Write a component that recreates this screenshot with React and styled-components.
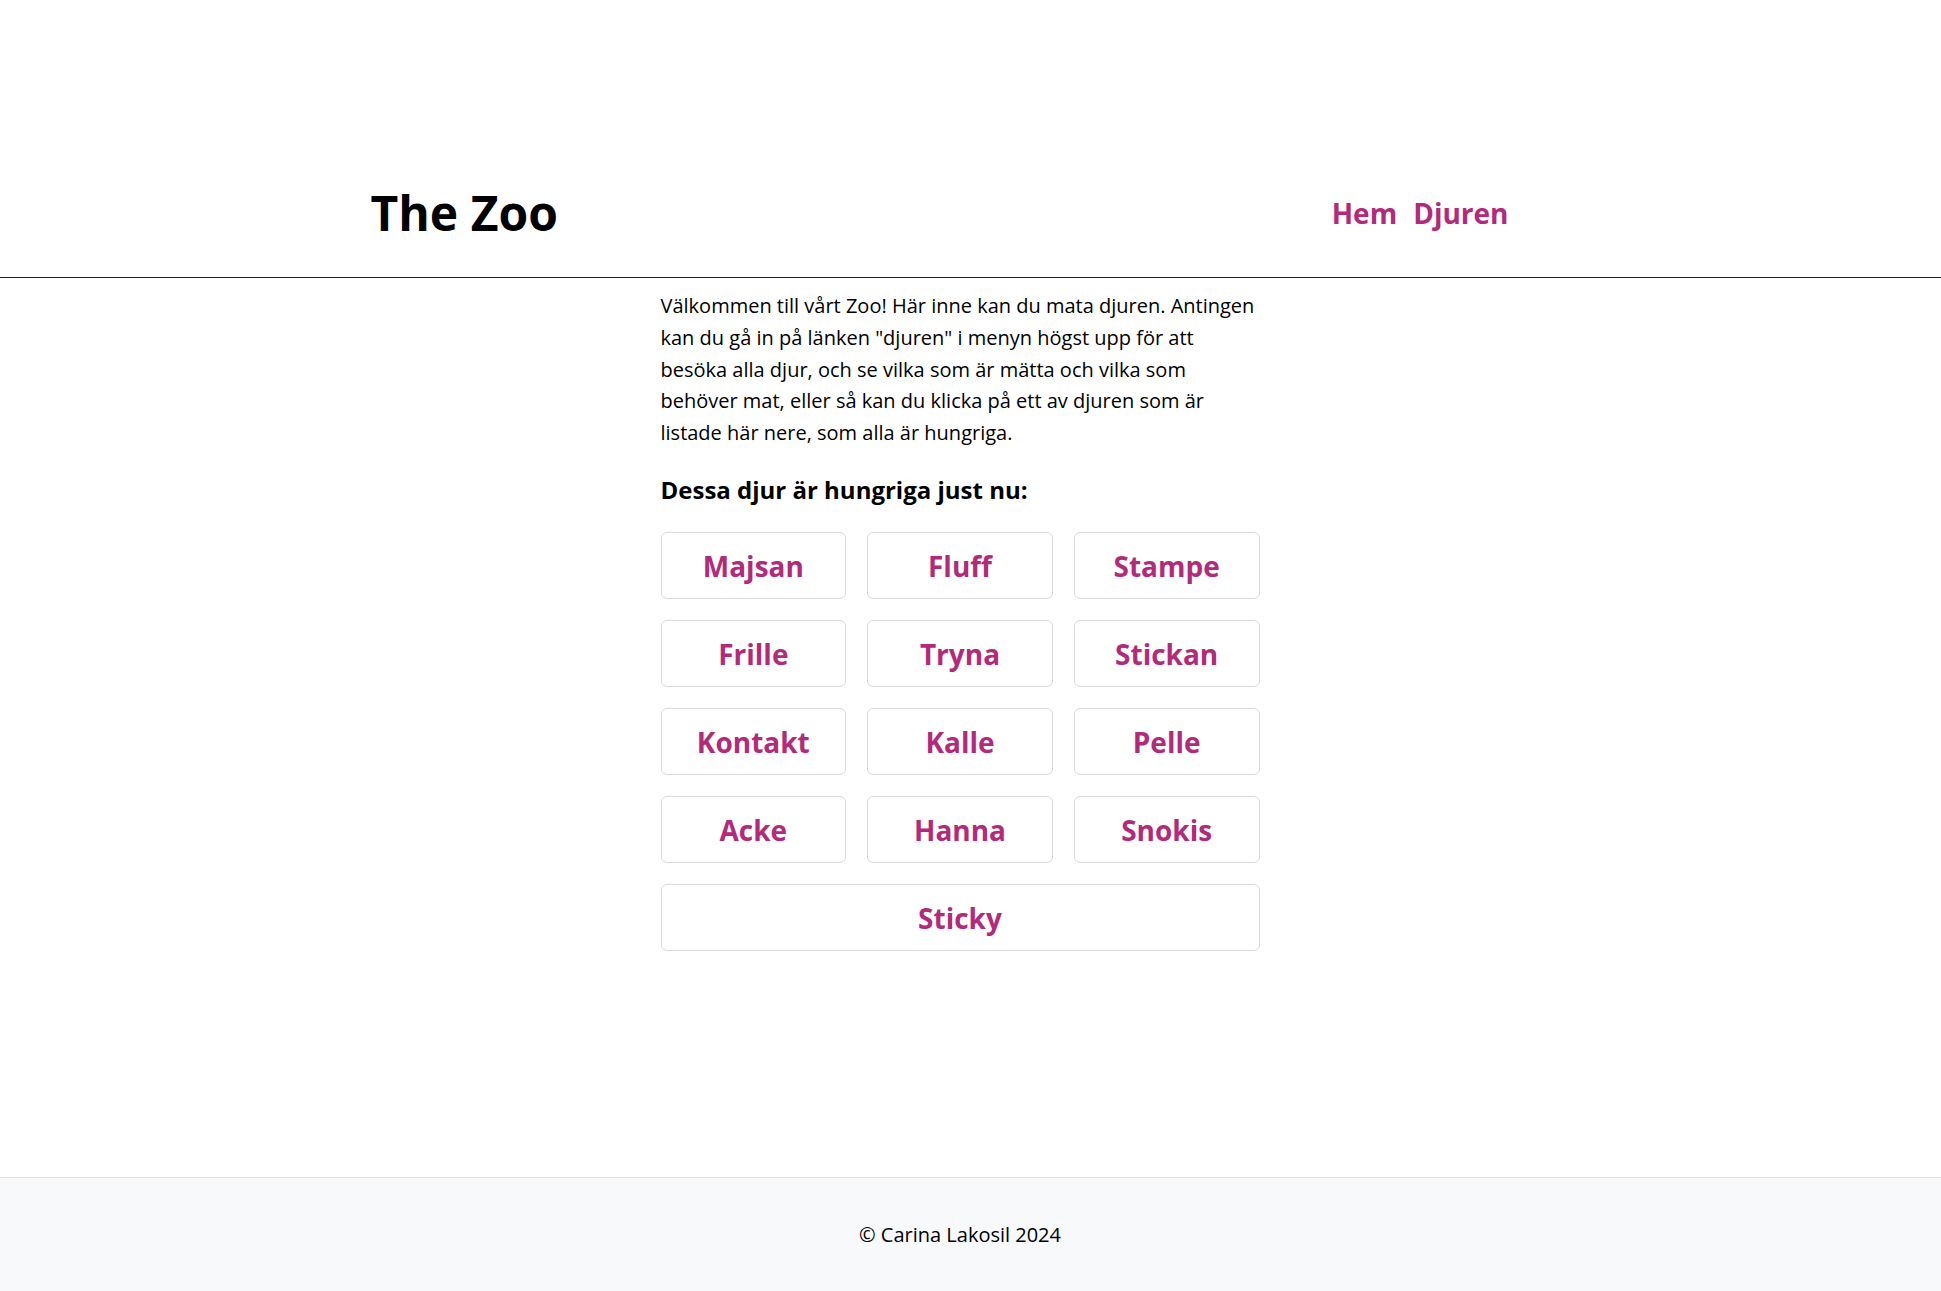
import styled, { createGlobalStyle } from "styled-components";

const animals = [
    "Majsan", "Fluff", "Stampe",
    "Frille", "Tryna", "Stickan",
    "Kontakt", "Kalle", "Pelle",
    "Acke", "Hanna", "Snokis",
    "Sticky",
];

const GlobalStyle = createGlobalStyle`
    html, body {
        margin: 0;
        padding: 0;
        background: #fff;
    }
    body {
        font-family: "Open Sans", "Noto Sans", sans-serif;
        color: #000;
    }
    * {
        box-sizing: border-box;
    }
`;

function App() {
    return (
        <>
            <GlobalStyle />
            <Page>
                <Header>
                    <HeaderInner>
                        <Logo>The Zoo</Logo>
                        <Nav>
                            <NavLink href="#">Hem</NavLink>
                            <NavLink href="#">Djuren</NavLink>
                        </Nav>
                    </HeaderInner>
                </Header>
                <Main>
                    <Intro>
                        Välkommen till vårt Zoo! Här inne kan du mata djuren. Antingen kan du gå in på
                        länken "djuren" i menyn högst upp för att besöka alla djur, och se vilka som är
                        mätta och vilka som behöver mat, eller så kan du klicka på ett av djuren som är
                        listade här nere, som alla är hungriga.
                    </Intro>
                    <SubTitle>Dessa djur är hungriga just nu:</SubTitle>
                    <AnimalGrid>
                        {animals.map((name, index) => (
                            <AnimalButton
                                key={name}
                                href="#"
                                $wide={index === animals.length - 1 && animals.length % 3 === 1}
                            >
                                {name}
                            </AnimalButton>
                        ))}
                    </AnimalGrid>
                </Main>
                <Footer>© Carina Lakosil 2024</Footer>
            </Page>
        </>
    );
}

const Page = styled.div`
    min-height: 100vh;
    display: flex;
    flex-direction: column;
`;

const Header = styled.header`
    border-bottom: 1px solid #222;
    padding: 182px 0 33px;
`;

const HeaderInner = styled.div`
    width: 1200px;
    margin: 0 auto;
    padding: 0 62px 0 0;
    display: flex;
    justify-content: space-between;
    align-items: center;
`;

const Logo = styled.h1`
    margin: 0;
    font-size: 48px;
    font-weight: 700;
    line-height: 1.3;
`;

const Nav = styled.nav`
    display: flex;
    gap: 16px;
`;

const NavLink = styled.a`
    font-size: 28px;
    font-weight: 700;
    color: #b22a79;
    text-decoration: none;
`;

const Main = styled.main`
    flex: 1;
    width: 620px;
    margin: 0 auto;
    padding: 12px 21px 40px 0;
`;

const Intro = styled.p`
    margin: 0 0 25px;
    font-size: 20px;
    line-height: 1.58;
`;

const SubTitle = styled.h2`
    margin: 0 0 26px;
    font-size: 24px;
    font-weight: 700;
`;

const AnimalGrid = styled.div`
    display: grid;
    grid-template-columns: repeat(3, 1fr);
    gap: 21px;
`;

const AnimalButton = styled.a`
    grid-column: ${props => props.$wide ? "1 / -1" : "auto"};
    height: 67px;
    display: flex;
    align-items: center;
    justify-content: center;
    border: 1px solid #dadada;
    border-radius: 6px;
    font-size: 28px;
    font-weight: 700;
    color: #b22a79;
    text-decoration: none;
`;

const Footer = styled.footer`
    height: 114px;
    border-top: 1px solid #dee2e6;
    background: #f8f9fa;
    display: flex;
    align-items: center;
    justify-content: center;
    padding-right: 21px;
    font-size: 20px;
`;

export default App;
